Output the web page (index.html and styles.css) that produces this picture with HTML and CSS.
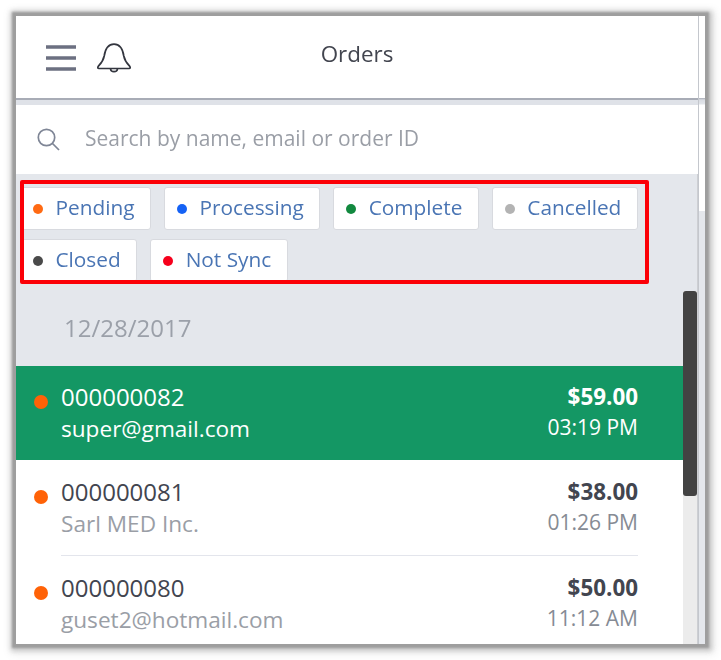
FILE: index.html
```html
<!DOCTYPE html>
<html lang="en">
<head>
<meta charset="utf-8">
<title>Orders</title>
<link rel="stylesheet" href="styles.css">
</head>
<body>
<div class="frame">
  <div class="main">
    <header class="topbar">
      <div class="topbar-icons">
        <svg class="icon-menu" width="30" height="26" viewBox="0 0 30 26"><path d="M0 2h30M0 13h30M0 24h30" fill="none" stroke="#6c7081" stroke-width="3.500"/></svg>
        <svg class="icon-bell" width="34" height="31" viewBox="0 0 34 31"><path d="M2 25.500c-1.600 0-1.400-1.500-.4-2.600 2.600-2.700 4.700-5 5.600-9.900C8.200 6.500 10.600 1.200 17 1.200S25.800 6.500 26.800 13c.9 4.900 3 7.200 5.600 9.900 1 1.100 1.200 2.600-.4 2.600zM13.500 26c.3 3.600 6.700 3.600 7 0" fill="none" stroke="#33363f" stroke-width="1.700" stroke-linejoin="round"/></svg>
      </div>
      <h1 class="title">Orders</h1>
    </header>
    <div class="band"></div>
    <div class="search">
      <svg class="icon-search" width="23" height="23" viewBox="0 0 23 23"><circle cx="9.500" cy="9.500" r="8.200" fill="none" stroke="#7f8696" stroke-width="1.700"/><path d="M15.500 15.500l6.500 6.500" stroke="#7f8696" stroke-width="1.700"/></svg>
      <span class="search-text">Search by name, email or order ID</span>
    </div>
    <div class="body">
      <div class="content">
        <div class="filters">
          <div class="chip"><i class="dot pending"></i>Pending</div>
          <div class="chip"><i class="dot processing"></i>Processing</div>
          <div class="chip"><i class="dot complete"></i>Complete</div>
          <div class="chip"><i class="dot cancelled"></i>Cancelled</div>
          <div class="chip"><i class="dot closed"></i>Closed</div>
          <div class="chip"><i class="dot notsync"></i>Not Sync</div>
        </div>
        <div class="date">12/28/2017</div>
        <div class="order selected">
          <i class="status"></i>
          <div class="order-inner">
            <div class="order-left"><div class="order-id">000000082</div><div class="order-sub">super@gmail.com</div></div>
            <div class="order-right"><div class="order-price">$59.00</div><div class="order-time">03:19 PM</div></div>
          </div>
        </div>
        <div class="order">
          <i class="status"></i>
          <div class="order-inner ruled">
            <div class="order-left"><div class="order-id">000000081</div><div class="order-sub">Sarl MED Inc.</div></div>
            <div class="order-right"><div class="order-price">$38.00</div><div class="order-time">01:26 PM</div></div>
          </div>
        </div>
        <div class="order">
          <i class="status"></i>
          <div class="order-inner">
            <div class="order-left"><div class="order-id">000000080</div><div class="order-sub">guset2@hotmail.com</div></div>
            <div class="order-right"><div class="order-price">$50.00</div><div class="order-time">11:12 AM</div></div>
          </div>
        </div>
      </div>
      <div class="scrollbar"><div class="thumb"></div></div>
    </div>
  </div>
  <div class="edge"></div>
  <div class="highlight"></div>
</div>
</body>
</html>
```
FILE: styles.css
```css
* { box-sizing: border-box; }
html, body { margin: 0; padding: 0; background: #fff; }
body { width: 721px; height: 660px; overflow: hidden; padding: 16px 0 0 16px; font-family: "Open Sans", "Noto Sans", sans-serif; }

.frame {
  position: relative;
  display: flex;
  width: 689px;
  height: 628px;
  background: #fff;
  box-shadow: 0 0 2px 4px #9e9e9e, 1px 1px 5px 6px #c6c6c6, 2px 2px 9px 8px #eeeeee;
  filter: blur(0.35px);
}
.main { width: 682px; display: flex; flex-direction: column; }
.edge {
  width: 7px;
  border-left: 1px solid #c4c7cd;
  background: linear-gradient(#fff 0, #fff 82px, #a9adb7 82px, #d9dce2 84px, #e2e5ea 88px, #fff 89px, #fff 195px, #e4e7ec 195px);
}

.topbar { position: relative; display: flex; align-items: center; justify-content: center; height: 84px; flex: none; border-bottom: 2px solid #a8acb6; }
.topbar-icons { position: absolute; left: 30px; top: 27px; display: flex; align-items: flex-start; gap: 21px; }
.icon-menu { margin-top: 2px; }
.title { margin: 0 0 8px; font-size: 22.400px; font-weight: 400; color: #42454f; }
.band { height: 5px; flex: none; background: #dfe2e8; }

.search { display: flex; align-items: center; height: 69px; flex: none; padding-left: 21px; gap: 25px; }
.icon-search { margin-top: -1px; }
.search-text { font-size: 21px; color: #9a9ea6; margin-top: -4px; }

.body { display: flex; flex: 1; min-height: 0; background: #e4e7ec; }
.content { width: 667px; flex: none; overflow: hidden; }

.filters { display: flex; flex-wrap: wrap; gap: 9px 13px; padding: 13px 0 0 4px; height: 118px; align-content: flex-start; }
.chip { display: flex; align-items: center; height: 43px; padding: 0 15.500px 4px 12px; background: #fff; border: 1px solid #d8dadf; border-radius: 3px; font-size: 20.800px; color: #4a75b4; }
.dot { width: 10px; height: 10px; border-radius: 50%; margin: 4px 12.500px 0 0; flex: none; }
.pending { background: #ff6a13; }
.processing { background: #1562f5; }
.complete { background: #12893f; }
.cancelled { background: #b3b3b3; }
.closed { background: #4a4a4a; }
.notsync { background: #f6001c; }

.date { height: 74px; padding: 19px 0 0 48px; font-size: 24px; line-height: 34px; color: #9ba0a9; }

.order { position: relative; height: 96px; background: #fff; padding: 0 45px; color: #42454f; }
.status { position: absolute; left: 18px; top: 30px; width: 14px; height: 14px; border-radius: 50%; background: #ff6207; }
.order-inner { display: flex; justify-content: space-between; height: 96px; padding-top: 15px; }
.ruled { border-bottom: 1px solid #e3e5ec; }
.order-id { font-size: 24px; line-height: 33px; }
.order-sub { font-size: 22.600px; line-height: 32px; color: #9a9ea6; }
.order-right { text-align: right; }
.order-price { font-size: 22.400px; line-height: 33px; font-weight: 700; }
.order-time { font-size: 21px; line-height: 28px; color: #868b94; }

.selected { height: 94px; background: #149764; color: #fff; }
.selected .status { top: 29px; }
.selected .order-inner { height: 94px; padding-top: 14px; }
.selected .order-sub, .selected .order-time { color: #fff; }

.scrollbar { width: 15px; flex: none; padding-top: 117px; border-right: 1px solid #cdcfd3; background: linear-gradient(#e4e7ec 117px, #ececec 117px); }
.thumb { height: 205px; background: #434343; border-radius: 3px; }

.highlight { position: absolute; left: 4px; top: 164px; width: 629px; height: 104px; border: 4px solid #fb0007; border-radius: 2px; pointer-events: none; }
```
